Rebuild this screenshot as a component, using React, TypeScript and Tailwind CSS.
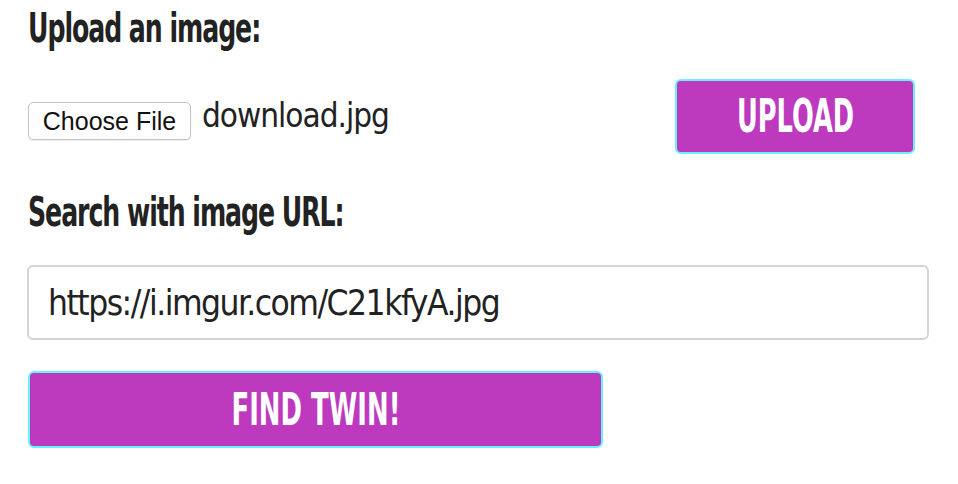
import React, { FC, useState } from "react";

const condensed = "font-['Liberation_Sans_Narrow','DejaVu_Sans_Condensed',sans-serif]";

const Component: FC = () => {
  const [url, setUrl] = useState("https://i.imgur.com/C21kfyA.jpg");
  return (
    <div className="w-[958px] h-[484px] bg-white pl-[28px] pr-[29px] pt-[6px] text-[#222]">
      <h2 className={`${condensed} font-bold text-[40px] leading-[44px] tracking-[-1.5px]`}>
        <span className="inline-block origin-left scale-x-[0.70]">Upload an image:</span>
      </h2>
      <div className="mt-[29px] flex items-center justify-between pr-[14px]">
        <div className="flex items-center pt-[9px]">
          <button
            type="button"
            className="h-[38px] w-[163px] rounded-[5px] border border-[#c4c4c4] bg-white font-['Liberation_Sans',Arial,sans-serif] text-[25px] text-[#111] shadow-[0_1px_1px_rgba(0,0,0,0.08)]"
          >
            Choose File
          </button>
          <span className={`${condensed} ml-[11px] -mt-[10px] text-[33px] tracking-[-1px]`}>
            download.jpg
          </span>
        </div>
        <button
          type="submit"
          className={`${condensed} h-[75px] w-[240px] rounded-[6px] border-2 border-[#66f2ff] bg-[#bd39bd] text-[46px] font-bold text-white`}
        >
          <span className="inline-block scale-x-[0.62]">UPLOAD</span>
        </button>
      </div>
      <h2 className={`${condensed} mt-[36px] font-bold text-[40px] leading-[44px] tracking-[-1.5px]`}>
        <span className="inline-block origin-left scale-x-[0.70]">Search with image URL:</span>
      </h2>
      <input
        className={`${condensed} mt-[31px] block h-[75px] w-[902px] -ml-px rounded-[6px] border-2 border-[#d4d4d4] px-[19px] text-[35px] tracking-[-1.5px] text-[#222] outline-none`}
        type="text"
        value={url}
        onChange={(e) => setUrl(e.target.value)}
      />
      <button
        type="submit"
        className={`${condensed} mt-[31px] block h-[77px] w-[575px] rounded-[6px] border-2 border-[#66f2ff] bg-[#bd39bd] text-[45px] font-bold text-white`}
      >
        <span className="inline-block scale-x-[0.64]">FIND TWIN!</span>
      </button>
    </div>
  );
};

Component.displayName = "TwinSearchForm";
export default Component;
